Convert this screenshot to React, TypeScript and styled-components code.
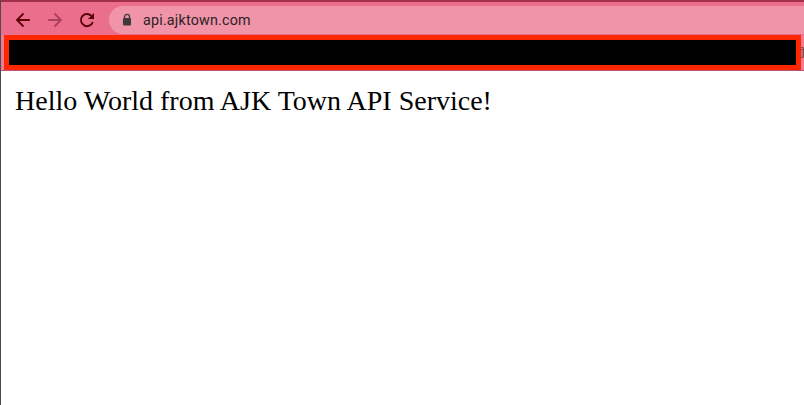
import React from 'react';
import styled, { createGlobalStyle } from 'styled-components';

const GlobalStyle = createGlobalStyle`
  * { box-sizing: border-box; }
  html, body { margin: 0; padding: 0; background: #fff; overflow: hidden; }
`;

const Window = styled.div`
  width: 804px;
  height: 405px;
  display: flex;
  flex-direction: column;
  border-left: 1px solid #4d4a4c;
  background: #fff;
  overflow: hidden;
`;

const Toolbar = styled.header`
  height: 35px;
  flex: none;
  display: flex;
  align-items: center;
  border-top: 2px solid #a3304b;
  background: #eb6f8d;
  padding: 3px 0 0 12px;
`;

const NavButton = styled.button<{ $muted?: boolean }>`
  width: 20px;
  height: 20px;
  margin-right: 12px;
  padding: 0;
  border: 0;
  background: none;
  color: ${(p) => (p.$muted ? '#a8405a' : '#5c0008')};
  svg { display: block; }
`;

const AddressBar = styled.div`
  flex: 1;
  height: 28px;
  display: flex;
  align-items: center;
  gap: 11px;
  padding-left: 13px;
  border-radius: 14px 0 0 14px;
  background: #f094aa;
`;

const Url = styled.span`
  font: 14.3px/20px Roboto, sans-serif;
  letter-spacing: 0.2px;
  color: #2b1f23;
`;

const BookmarksBar = styled.div`
  height: 36px;
  flex: none;
  display: flex;
  padding-left: 3px;
  border-bottom: 1px solid #c05573;
  background: #ee7b97;
`;

const Redaction = styled.div`
  width: 797px;
  height: 35px;
  border: 5px solid #ff2600;
  background: #000;
`;

const BookmarkEdge = styled.svg`
  margin-top: 12px;
`;

const Page = styled.main`
  padding: 14px;
  font: 28px/32px "Liberation Serif", serif;
  color: #000;
  white-space: nowrap;
`;

export default function App() {
  return (
    <>
      <GlobalStyle />
      <Window>
        <Toolbar>
          <NavButton aria-label="Back">
            <svg width="20" height="20" viewBox="0 0 20 20" fill="none" stroke="currentColor" strokeWidth="1.8">
              <path d="M16.8 10H4.5M10.5 3.5L4 10l6.5 6.5" />
            </svg>
          </NavButton>
          <NavButton aria-label="Forward" $muted>
            <svg width="20" height="20" viewBox="0 0 20 20" fill="none" stroke="currentColor" strokeWidth="1.8">
              <path d="M3.2 10h12.3M9.5 3.5L16 10l-6.5 6.5" />
            </svg>
          </NavButton>
          <NavButton aria-label="Reload">
            <svg width="20" height="20" viewBox="0 0 20 20" fill="none" stroke="currentColor" strokeWidth="1.9">
              <path d="M15.8 12a6.1 6.1 0 1 1-1.4-6.2L16 7.4" />
              <path d="M17 3v6h-6z" fill="currentColor" stroke="none" />
            </svg>
          </NavButton>
          <AddressBar>
            <svg width="10" height="14" viewBox="0 0 10 14">
              <path d="M2.5 6V3.9a2.5 2.5 0 0 1 5 0V6" fill="none" stroke="#40393d" strokeWidth="1.3" />
              <rect x="1" y="5" width="8" height="7.5" rx="1" fill="#40393d" />
            </svg>
            <Url>api.ajktown.com</Url>
          </AddressBar>
        </Toolbar>
        <BookmarksBar>
          <Redaction />
          <BookmarkEdge width="3" height="12" viewBox="0 0 3 12">
            <path d="M0 .5h2.5M0 2.5h3M0 10.5h2.5M2.5 1v9" fill="none" stroke="#7c4652" />
            <path d="M0 3h2v7H0z" fill="#c07083" />
          </BookmarkEdge>
        </BookmarksBar>
        <Page>Hello World from AJK Town API Service!</Page>
      </Window>
    </>
  );
}
